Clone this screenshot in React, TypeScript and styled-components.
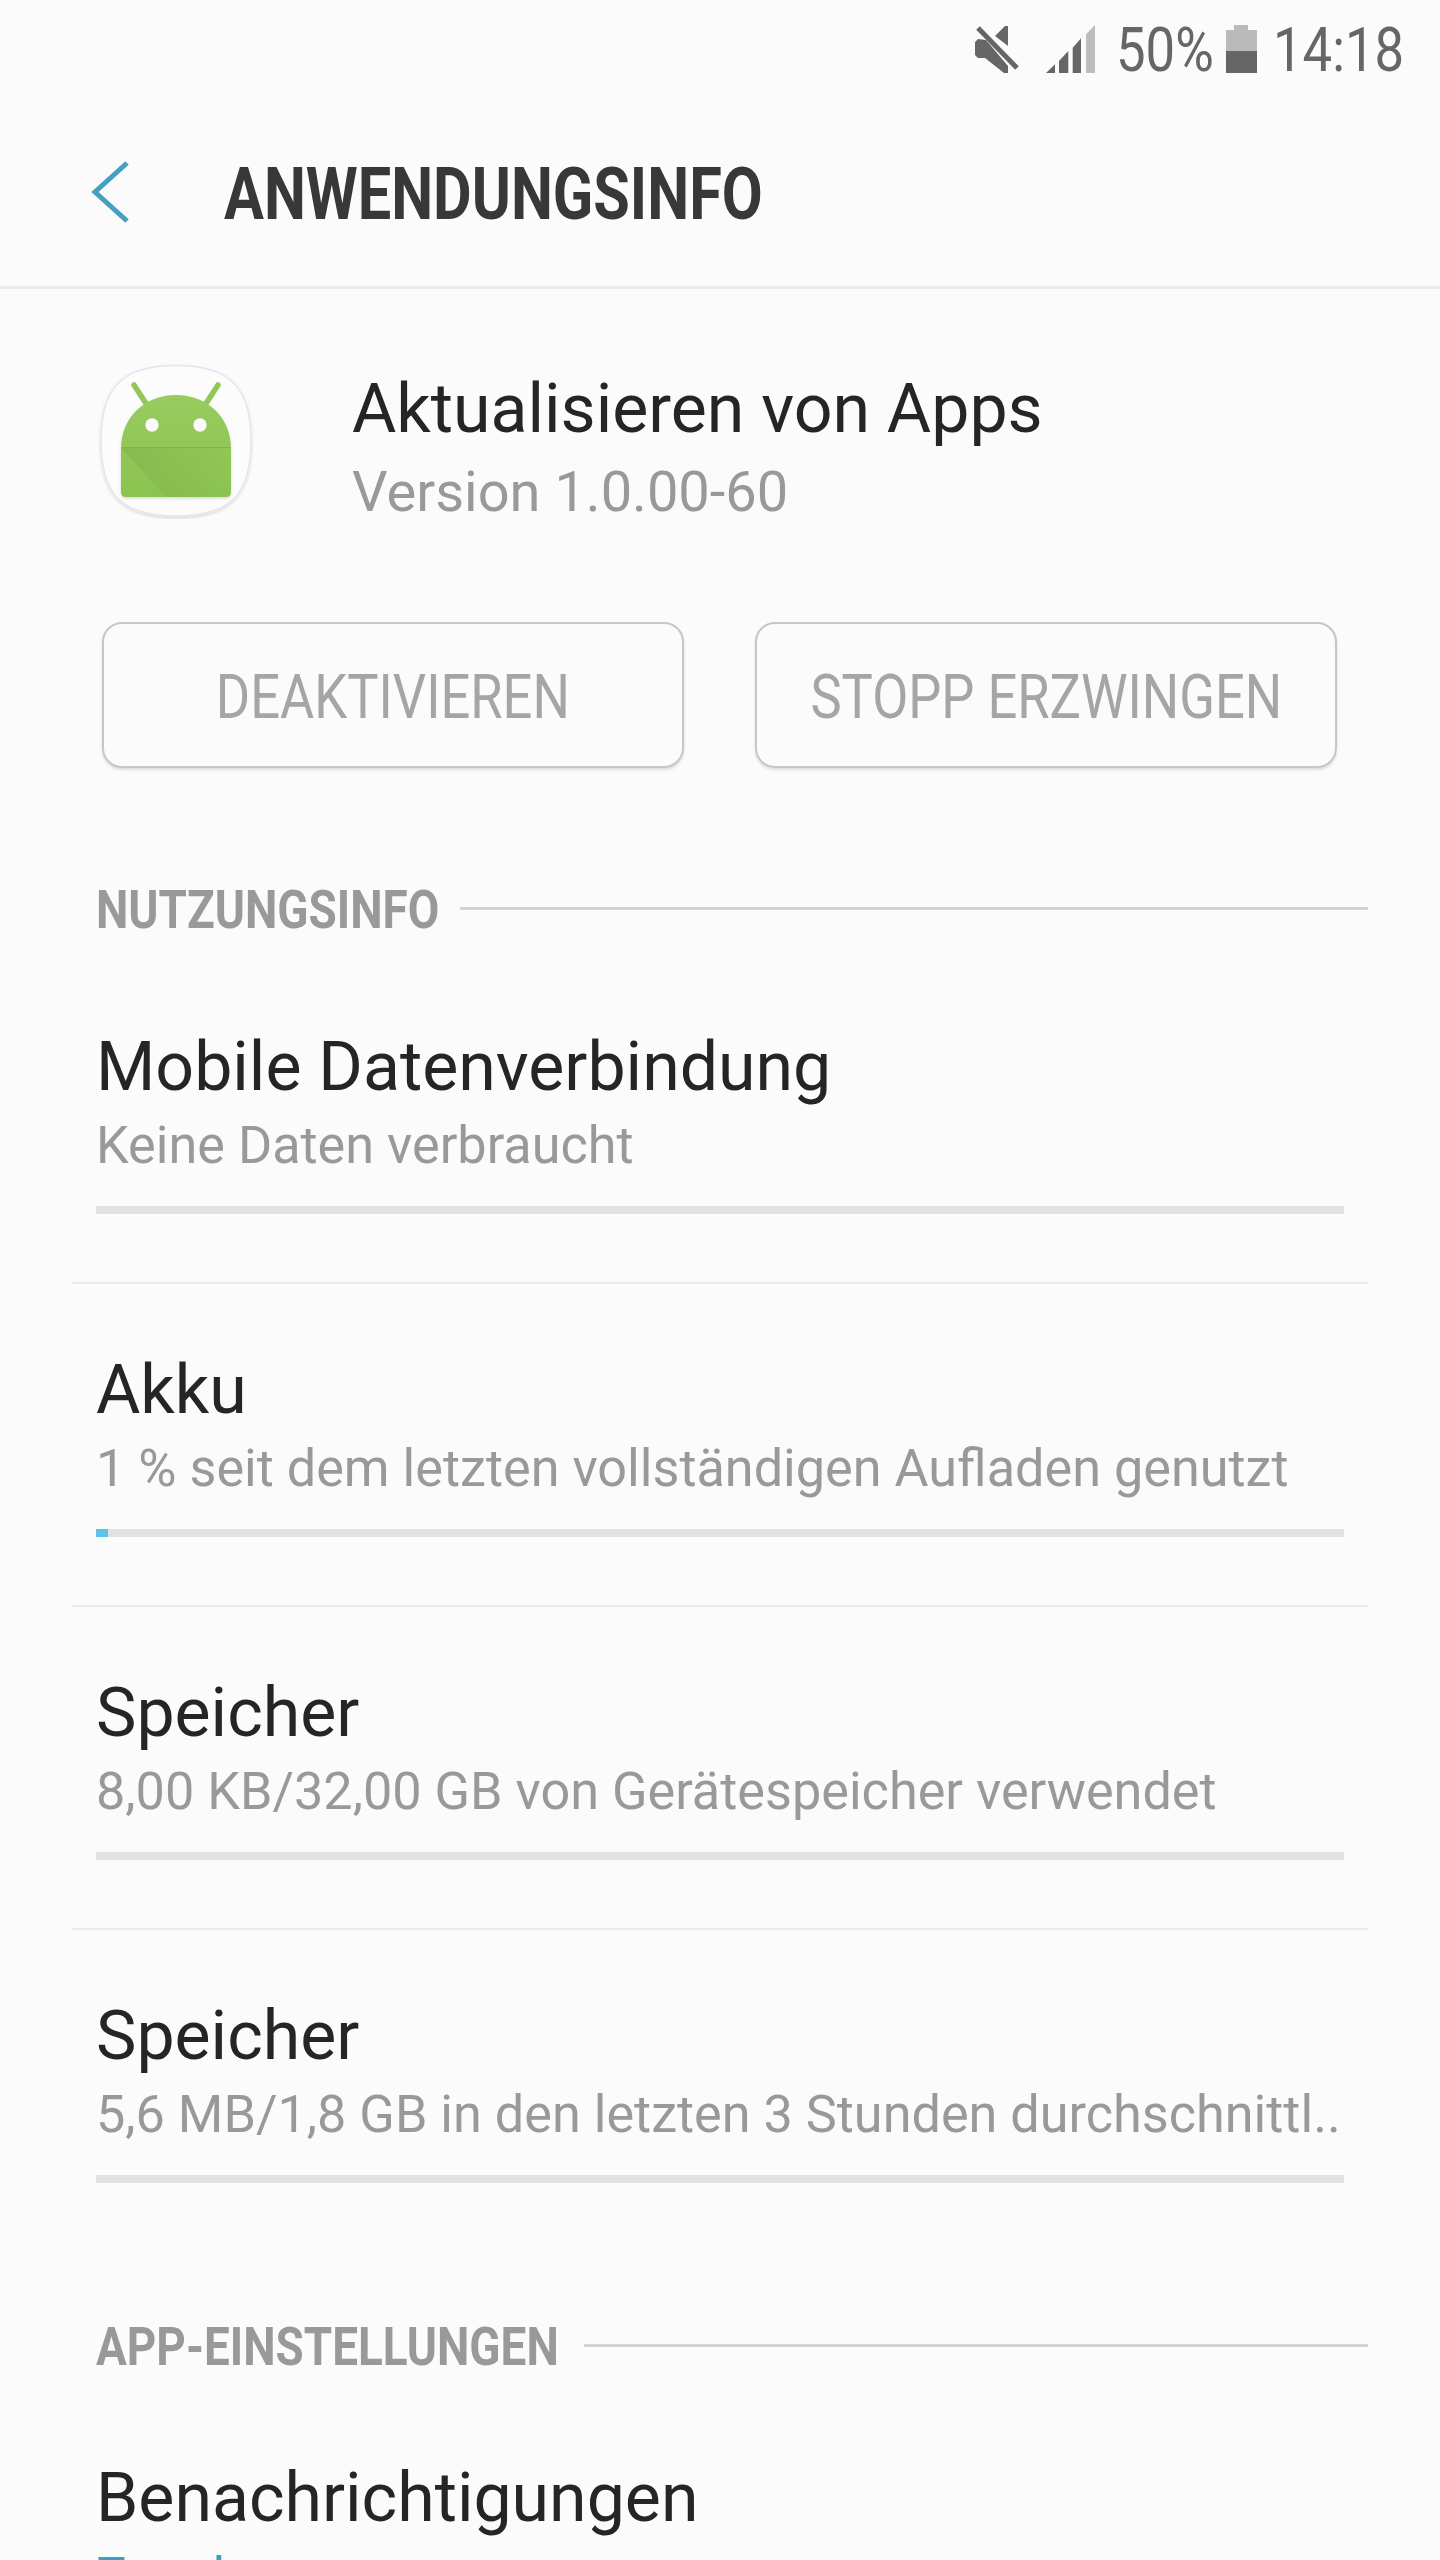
import React from 'react';
import styled, { createGlobalStyle } from 'styled-components';

const GlobalStyle = createGlobalStyle`
  html, body {
    margin: 0;
    padding: 0;
    background: #fbfbfb;
  }
`;

const Screen = styled.div`
  width: 1440px;
  height: 2560px;
  overflow: hidden;
  background: #fbfbfb;
  font-family: Roboto, "Liberation Sans", sans-serif;
`;

const StatusBar = styled.div`
  height: 100px;
  display: flex;
  align-items: center;
  justify-content: flex-end;
  padding-right: 35px;
  color: #666;
`;

const StatusText = styled.span<{ $width: number }>`
  display: block;
  width: ${({ $width }) => $width}px;
  font-size: 62px;
  line-height: 100px;
  white-space: nowrap;
  transform: scaleX(0.85);
  transform-origin: left center;
`;

const StatusIcon = styled.svg<{ $left?: number; $right?: number }>`
  flex: none;
  margin-left: ${({ $left }) => $left ?? 0}px;
  margin-right: ${({ $right }) => $right ?? 0}px;
`;

const Header = styled.header`
  height: 189px;
  border-bottom: 3px solid #ebebeb;
  display: flex;
  align-items: center;
  padding-left: 90px;
  box-sizing: border-box;
`;

const BackIcon = styled.svg`
  width: 40px;
  height: 62px;
  margin-right: 94px;
  margin-top: -2px;
`;

const Title = styled.h1`
  margin: 3px 0 0;
  font-size: 72px;
  font-weight: 700;
  color: #383838;
  transform: scaleX(0.825);
  transform-origin: left center;
  white-space: nowrap;
`;

const AppRow = styled.div`
  display: flex;
  align-items: flex-start;
  padding: 74px 0 0 98px;
`;

const AppIcon = styled.svg`
  width: 156px;
  height: 156px;
  margin-right: 98px;
`;

const AppText = styled.div`
  margin-top: 8px;
`;

const AppName = styled.div`
  font-size: 68px;
  line-height: 76px;
  color: #252525;
`;

const AppVersion = styled.div`
  font-size: 56px;
  line-height: 66px;
  margin-top: 12px;
  color: #999;
`;

const Buttons = styled.div`
  display: flex;
  gap: 71px;
  padding: 97px 0 0 102px;
`;

const Button = styled.div`
  width: 582px;
  height: 146px;
  box-sizing: border-box;
  padding-top: 3px;
  border: 2px solid #c6c6c6;
  border-radius: 20px;
  box-shadow: 0 2px 3px rgba(0, 0, 0, 0.12);
  display: flex;
  align-items: center;
  justify-content: center;
  font-size: 61px;
  color: #a5a5a5;
  white-space: nowrap;
`;

const ButtonLabel = styled.span`
  display: inline-block;
  transform: scaleX(0.86);
`;

const SectionHead = styled.div<{ $top: number; $after: number }>`
  display: flex;
  align-items: center;
  margin: ${({ $top }) => $top}px 72px ${({ $after }) => $after}px 96px;
  height: 60px;
`;

const SectionTitle = styled.span<{ $width: number }>`
  display: block;
  width: ${({ $width }) => $width}px;
  flex: none;
  padding-top: 4px;
  font-size: 53px;
  font-weight: 700;
  color: #999;
  white-space: nowrap;
  transform: scaleX(0.865);
  transform-origin: left center;
`;

const SectionLine = styled.div`
  flex: 1;
  height: 3px;
  background: #d3d3d3;
`;

const Item = styled.div<{ $divider?: boolean }>`
  margin: 0 72px;
  height: 323px;
  box-sizing: border-box;
  padding: 0 24px;
  border-bottom: ${({ $divider }) => ($divider ? '2px solid #ebebeb' : 'none')};
`;

const ItemTitle = styled.div`
  font-size: 68px;
  line-height: 80px;
  padding-top: 66px;
  color: #252525;
  white-space: nowrap;
`;

const ItemSub = styled.div`
  font-size: 52.2px;
  line-height: 66px;
  margin-top: 6px;
  color: #999;
  white-space: nowrap;
`;

const Bar = styled.div`
  height: 8px;
  width: 1248px;
  margin-top: 27px;
  background: #e2e2e0;
`;

const BarFill = styled.div`
  height: 100%;
  background: #59c3e8;
`;

const Link = styled.div`
  font-size: 52.2px;
  line-height: 66px;
  margin-top: 6px;
  color: #3f9fc2;
`;

const AppGlyph = () => (
  <AppIcon viewBox="0 0 156 156">
    <defs>
      <linearGradient id="robot" x1="0" y1="0" x2="0" y2="1">
        <stop offset="0" stopColor="#98cb5f" />
        <stop offset="1" stopColor="#8cc350" />
      </linearGradient>
      <linearGradient id="fold" x1="0" y1="0" x2="1" y2="0">
        <stop offset="0" stopColor="#6f9c3e" stopOpacity="0.28" />
        <stop offset="1" stopColor="#6f9c3e" stopOpacity="0" />
      </linearGradient>
      <filter id="lift" x="-10%" y="-10%" width="120%" height="120%">
        <feDropShadow dx="0" dy="1.5" stdDeviation="1.5" floodColor="#000" floodOpacity="0.14" />
      </filter>
    </defs>
    <path
      d="M78 2.5 C132 2.5 153 24 153 78 C153 132 132 153 78 153 C24 153 3 132 3 78 C3 24 24 2.5 78 2.5 Z"
      fill="#fcfcfc"
      stroke="#e6e6e6"
      strokeWidth="1.5"
      filter="url(#lift)"
    />
    <path d="M36 22 L49 42 M120 22 L107 42" stroke="#92c757" strokeWidth="5.5" strokeLinecap="round" />
    <path
      d="M23 86 C23 54 47 32 78 32 C109 32 133 54 133 86 L133 129 Q133 134 128 134 L28 134 Q23 134 23 129 Z"
      fill="url(#robot)"
      filter="url(#lift)"
    />
    <path d="M23 85 L133 85 L133 134 L68 134 Z" fill="url(#fold)" />
    <path d="M23 84.5 H133" stroke="#7dab4a" strokeWidth="1" opacity="0.7" />
    <circle cx="54" cy="62" r="6.7" fill="#fbfbfb" />
    <circle cx="102" cy="62" r="6.7" fill="#fbfbfb" />
  </AppIcon>
);

export default function App() {
  return (
    <Screen>
      <GlobalStyle />
      <StatusBar>
        <StatusIcon width="50" height="50" viewBox="0 0 50 50">
          <path d="M22 11 L32 1 H35 V21 Z" fill="#666" />
          <path d="M5 14 L2 17 V30 L5 33 H12 L31 48 H35 V41 L13 15 Z" fill="#666" />
          <path d="M5 3 L44 43" stroke="#666" strokeWidth="5" />
        </StatusIcon>
        <StatusIcon width="50" height="50" viewBox="0 0 50 50" $left={22} $right={21}>
          <path d="M1 48 L10 39.3 V48 Z M14 36 L23.3 26 V48 H14 Z M27.7 22.7 L36 13.3 V48 H27.7 Z" fill="#666" />
          <path d="M41 9.3 L50 0 V48 H41 Z" fill="#bdbdbd" />
        </StatusIcon>
        <StatusText $width={97}>50%</StatusText>
        <StatusIcon width="34" height="50" viewBox="0 0 34 50" $left={11} $right={15}>
          <path d="M10 0 H24 V5 H33 V26 H2 V5 H10 Z" fill="#bababa" />
          <path d="M2 26 H33 V48 H2 Z" fill="#666" />
        </StatusIcon>
        <StatusText $width={132}>14:18</StatusText>
      </StatusBar>
      <Header>
        <BackIcon viewBox="0 0 40 62">
          <path d="M37 2 L5 31 L37 60" fill="none" stroke="#449fc1" strokeWidth="5" />
        </BackIcon>
        <Title>ANWENDUNGSINFO</Title>
      </Header>
      <AppRow>
        <AppGlyph />
        <AppText>
          <AppName>Aktualisieren von Apps</AppName>
          <AppVersion>Version 1.0.00-60</AppVersion>
        </AppText>
      </AppRow>
      <Buttons>
        <Button><ButtonLabel>DEAKTIVIEREN</ButtonLabel></Button>
        <Button><ButtonLabel>STOPP ERZWINGEN</ButtonLabel></Button>
      </Buttons>
      <SectionHead $top={110} $after={23}>
        <SectionTitle $width={364}>NUTZUNGSINFO</SectionTitle>
        <SectionLine />
      </SectionHead>
      <Item $divider>
        <ItemTitle>Mobile Datenverbindung</ItemTitle>
        <ItemSub>Keine Daten verbraucht</ItemSub>
        <Bar />
      </Item>
      <Item $divider>
        <ItemTitle>Akku</ItemTitle>
        <ItemSub>1 % seit dem letzten vollständigen Aufladen genutzt</ItemSub>
        <Bar><BarFill style={{ width: '1%' }} /></Bar>
      </Item>
      <Item $divider>
        <ItemTitle>Speicher</ItemTitle>
        <ItemSub>8,00 KB/32,00 GB von Gerätespeicher verwendet</ItemSub>
        <Bar />
      </Item>
      <Item>
        <ItemTitle>Speicher</ItemTitle>
        <ItemSub>5,6 MB/1,8 GB in den letzten 3 Stunden durchschnittl..</ItemSub>
        <Bar />
      </Item>
      <SectionHead $top={62} $after={17}>
        <SectionTitle $width={488}>APP-EINSTELLUNGEN</SectionTitle>
        <SectionLine />
      </SectionHead>
      <Item>
        <ItemTitle>Benachrichtigungen</ItemTitle>
        <Link>Zugelassen</Link>
      </Item>
    </Screen>
  );
}
